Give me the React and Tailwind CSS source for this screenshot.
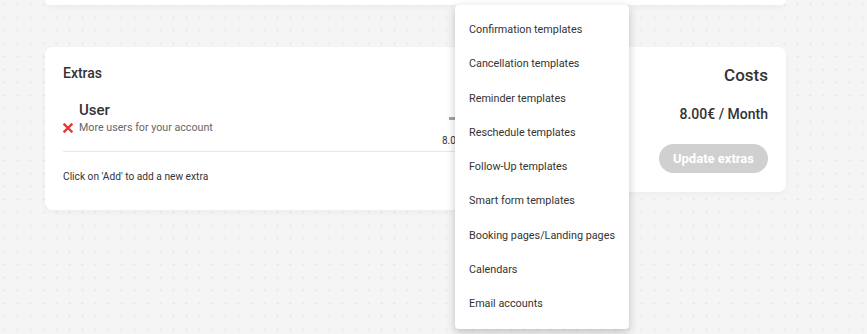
import React from 'react';

const menuItems = [
  'Confirmation templates',
  'Cancellation templates',
  'Reminder templates',
  'Reschedule templates',
  'Follow-Up templates',
  'Smart form templates',
  'Booking pages/Landing pages',
  'Calendars',
  'Email accounts',
];

const RedX = () => (
  <svg className="w-[10px] h-[10px] shrink-0" viewBox="0 0 10 10" fill="none">
    <path d="M1.5 1.5l7 7M8.5 1.5l-7 7" stroke="#e53935" strokeWidth="2.4" strokeLinecap="square" />
  </svg>
);

export default function App() {
  return (
    <div
      className="relative h-[334px] w-full overflow-hidden bg-[#f5f5f5] bg-[radial-gradient(#ebebeb_1px,transparent_1.4px)] bg-[size:13px_13px] bg-[position:-2px_-2px] font-['Roboto',sans-serif] text-[#333]"
    >
      <div className="ml-[45px] w-[741px]">
        {/* previous card, only its bottom edge shows */}
        <div className="h-[5px] rounded-b-lg bg-white shadow-[0_2px_6px_rgba(0,0,0,0.05)]"></div>

        <div className="mt-[42px] flex items-start gap-4">
          {/* Extras */}
          <div className="w-[555px] rounded-lg bg-white px-[18px] pt-4 pb-[25px] shadow-[0_2px_6px_rgba(0,0,0,0.04)]">
            <h2 className="text-[14px] leading-5 font-medium text-[#333]">Extras</h2>

            <div className="mt-[17px] flex justify-between border-b border-[#e8e8e8] pb-[3px]">
              <div>
                <div className="pl-4 text-[15px] leading-5 font-medium text-[#333]">User</div>
                <div className="flex items-center gap-[6px] pt-[1px]">
                  <RedX />
                  <span className="text-[10.7px] leading-[14px] text-[#666]">More users for your account</span>
                </div>
              </div>
              <div className="w-[140px]">
                <div className="mt-[17px] ml-[7px] h-[3px] w-[6px] bg-[#a3a3a3]"></div>
                <div className="mt-[14px] text-[10px] leading-[14px] text-[#333]">8.00€</div>
              </div>
            </div>

            <p className="mt-[17px] text-[10.2px] leading-4 text-[#333]">Click on 'Add' to add a new extra</p>
          </div>

          {/* Costs */}
          <div className="flex flex-1 flex-col items-end rounded-lg bg-white pt-4 pr-[18px] pb-[19px] shadow-[0_2px_6px_rgba(0,0,0,0.04)]">
            <h2 className="text-[17px] leading-6 font-medium text-[#333]">Costs</h2>
            <div className="mt-[17px] text-[14px] leading-5 font-medium text-[#333]">8.00€ / Month</div>
            <button className="mt-5 h-[29px] rounded-full bg-[#d0d0d0] px-[14px] text-[13px] font-bold text-white">
              Update extras
            </button>
          </div>
        </div>
      </div>

      {/* dropdown menu */}
      <div className="absolute left-[455px] top-[5px] w-[174px] rounded bg-white py-2 shadow-[0_3px_10px_rgba(0,0,0,0.22)]">
        {menuItems.map((item) => (
          <div key={item} className="flex h-[34.25px] items-center whitespace-nowrap px-[14px] text-[10.8px] text-[#333]">
            {item}
          </div>
        ))}
      </div>
    </div>
  );
}
